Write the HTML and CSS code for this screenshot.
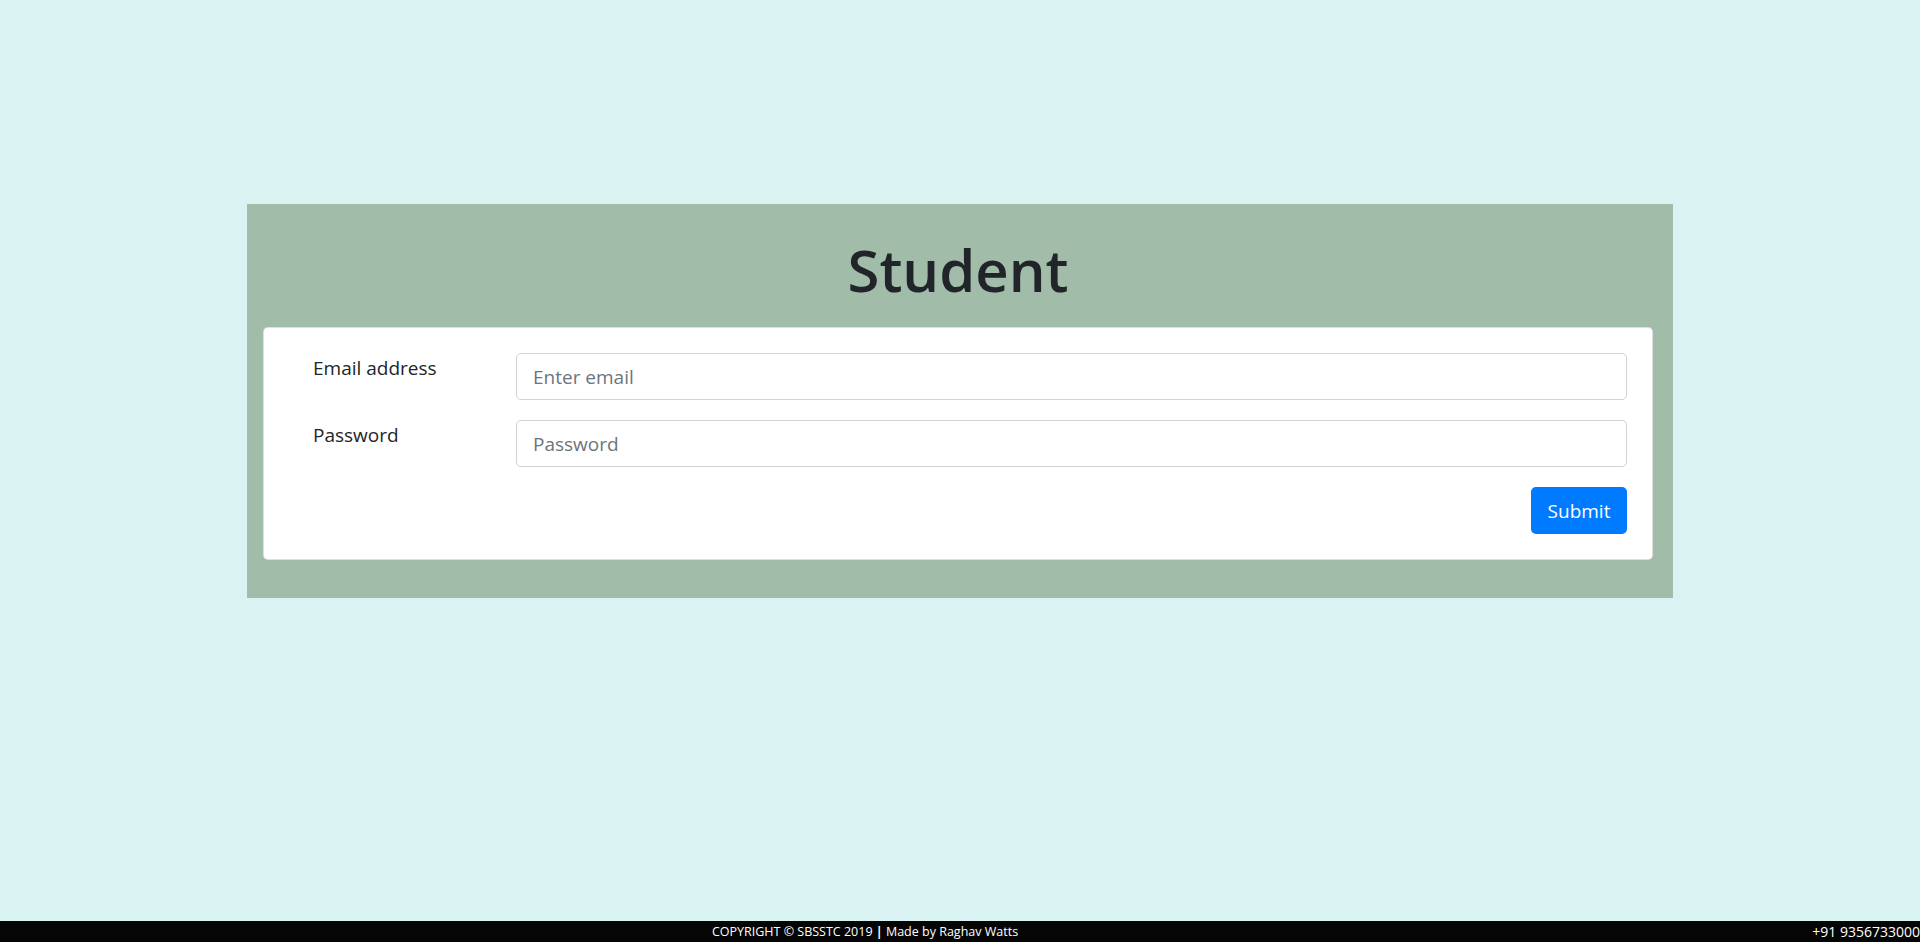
FILE: index.html
```html
<!DOCTYPE html>
<html lang="en">
<head>
<meta charset="utf-8">
<title>Student Login</title>
<link rel="stylesheet" href="styles.css">
</head>
<body>
<main class="main">
  <section class="panel">
    <h1 class="title">Student</h1>
    <form class="card">
      <div class="row">
        <label class="label" for="email">Email address</label>
        <input class="input" id="email" type="email" placeholder="Enter email">
      </div>
      <div class="row">
        <label class="label" for="pwd">Password</label>
        <input class="input" id="pwd" type="password" placeholder="Password">
      </div>
      <div class="actions">
        <button class="btn" type="submit">Submit</button>
      </div>
    </form>
  </section>
</main>
<footer class="footer">
  <div class="copy">COPYRIGHT © SBSSTC 2019 <b>|</b> Made by Raghav Watts</div>
  <div class="phone">+91 9356733000</div>
</footer>
</body>
</html>
```

FILE: styles.css
```css
html, body {
  margin: 0;
  padding: 0;
}
body {
  background: #d9f3f3;
  font-family: "Open Sans", "Noto Sans", sans-serif;
  color: #212529;
  min-height: 942px;
  display: flex;
  flex-direction: column;
}
.main {
  flex: 1;
}
.panel {
  width: 1426px;
  margin: 204px auto 0;
  background: #a2bcaa;
  padding: 0 20px 38px 16px;
  box-sizing: border-box;
}
.title {
  margin: 0;
  padding-top: 8px;
  height: 123px;
  box-sizing: border-box;
  font-size: 58px;
  line-height: 115px;
  font-weight: 600;
  text-align: center;
  color: #212529;
}
.card {
  background: #fff;
  border: 1px solid rgba(0,0,0,.125);
  border-radius: 5px;
  padding: 25px;
  display: flex;
  flex-direction: column;
  gap: 20px;
}
.row {
  display: flex;
  align-items: flex-start;
}
.label {
  width: 227px;
  box-sizing: border-box;
  padding-left: 24px;
  font-size: 19px;
  line-height: 30px;
  color: #212529;
}
.input {
  flex: 1;
  height: 47px;
  box-sizing: border-box;
  border: 1px solid #ced4da;
  border-radius: 5px;
  padding: 0 16px;
  font-family: inherit;
  font-size: 19px;
  color: #495057;
  background: #fff;
  outline: none;
}
.input::placeholder {
  color: #6c757d;
}
.actions {
  display: flex;
  justify-content: flex-end;
}
.btn {
  width: 96px;
  height: 47px;
  border: 0;
  border-radius: 5px;
  background: #007bff;
  color: #fff;
  font-family: inherit;
  font-size: 19px;
  cursor: pointer;
}
.footer {
  height: 21px;
  background: #050505;
  color: #fff;
  display: flex;
  font-size: 14px;
  line-height: 21px;
}
.copy {
  flex: 1;
  text-align: center;
  font-size: 12.5px;
}
.phone {
  width: 190px;
  text-align: right;
}
```
